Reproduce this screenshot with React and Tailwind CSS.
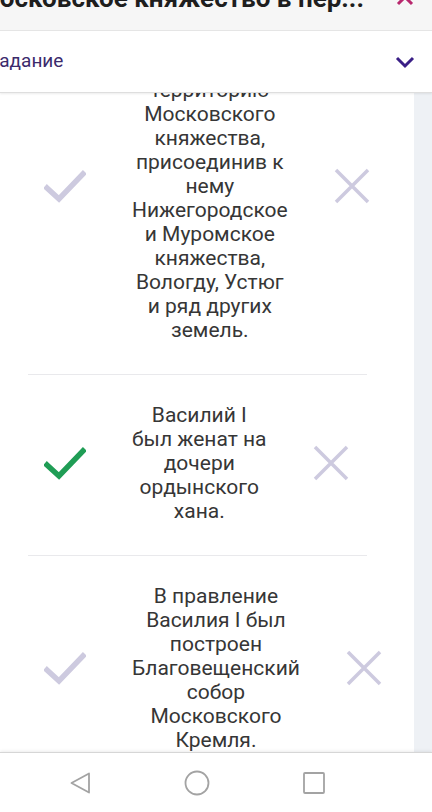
import React from 'react';

const rows = [
  {
    lines: ['Василий I', 'расширил', 'территорию', 'Московского', 'княжества,', 'присоединив к', 'нему', 'Нижегородское', 'и Муромское', 'княжества,', 'Вологду, Устюг', 'и ряд других', 'земель.'],
    correct: false,
  },
  {
    lines: ['Василий I', 'был женат на', 'дочери', 'ордынского', 'хана.'],
    correct: true,
  },
  {
    lines: ['В правление', 'Василия I был', 'построен', 'Благовещенский', 'собор', 'Московского', 'Кремля.'],
    correct: false,
  },
];

function Check({ green }) {
  return (
    <svg width="42" height="34" viewBox="0 0 42 34" fill="none">
      <path
        d="M3 19 L15 30 L39 5"
        stroke={green ? '#1f9d55' : '#cdcadf'}
        strokeWidth="5.5"
        strokeLinecap="square"
      />
    </svg>
  );
}

function Cross() {
  return (
    <svg width="36" height="36" viewBox="0 0 36 36" fill="none">
      <path d="M2 2 L34 34 M34 2 L2 34" stroke="#cdcadf" strokeWidth="3.5" />
    </svg>
  );
}

function Row({ row, last }) {
  return (
    <div>
      <div className="flex items-center pt-7 pb-8 pl-[44px] gap-[46px]">
        <Check green={row.correct} />
        <p className="whitespace-nowrap text-center text-[21px] leading-6 text-[#363636]">
          {row.lines.map((l, i) => (
            <span key={i} className="block">{l}</span>
          ))}
        </p>
        <Cross />
      </div>
      {!last && <div className="ml-[28px] w-[339px] h-px bg-[#e9e9ec]" />}
    </div>
  );
}

export default function App() {
  return (
    <div className="w-[432px] h-[812px] flex flex-col overflow-hidden bg-white" style={{ fontFamily: 'Roboto, "Noto Sans", sans-serif' }}>
      {/* top bar with clipped title */}
      <div className="h-[31px] bg-[#f6f6f6] border-b border-[#e6e6e6] flex items-start overflow-hidden shrink-0">
        <div className="-ml-[23px] -mt-[17px] text-[26px] leading-[30px] font-bold text-[#1e1e1e] whitespace-nowrap">
          Московское княжество в пер...
        </div>
        <svg className="ml-auto mr-[18px] -mt-[12px] shrink-0" width="18" height="18" viewBox="0 0 18 18" fill="none">
          <path d="M2 2 L16 16 M16 2 L2 16" stroke="#b8286e" strokeWidth="3" />
        </svg>
      </div>

      {/* task card */}
      <div className="h-[62px] bg-white border-b border-[#dedede] shadow-[0_1px_2px_rgba(0,0,0,0.08)] flex items-center overflow-hidden shrink-0 relative z-10">
        <span className="-ml-[12px] text-[19px] text-[#3b2a6b]">Задание</span>
        <svg className="ml-auto mr-[17px]" width="20" height="14" viewBox="0 0 20 14" fill="none">
          <path d="M2 3 L10 11 L18 3" stroke="#3a1f86" strokeWidth="3" />
        </svg>
      </div>

      {/* content */}
      <div className="flex-1 flex overflow-hidden">
        <div className="w-[414px] bg-white overflow-hidden">
          <div className="-mt-[91px]">
            {rows.map((r, i) => (
              <Row key={i} row={r} last={i === rows.length - 1} />
            ))}
          </div>
        </div>
        <div className="flex-1 bg-[#eef1f5]" />
      </div>

      {/* android nav */}
      <div className="h-[60px] shrink-0 bg-white border-t border-[#d6d6d6] shadow-[0_-1px_3px_rgba(0,0,0,0.08)] flex items-center">
        <div className="flex items-center w-full pl-[68px] gap-[92px]">
          <svg width="24" height="24" viewBox="0 0 24 24" fill="none">
            <path d="M21 2.5 L3.5 12 L21 21.5 Z" stroke="#a3a3a3" strokeWidth="1.8" strokeLinejoin="round" />
          </svg>
          <svg width="26" height="26" viewBox="0 0 26 26" fill="none">
            <circle cx="13" cy="13" r="11.5" stroke="#a3a3a3" strokeWidth="1.8" />
          </svg>
          <svg width="24" height="24" viewBox="0 0 24 24" fill="none">
            <rect x="2" y="2" width="20" height="20" rx="1" stroke="#a3a3a3" strokeWidth="1.8" />
          </svg>
        </div>
      </div>
    </div>
  );
}
